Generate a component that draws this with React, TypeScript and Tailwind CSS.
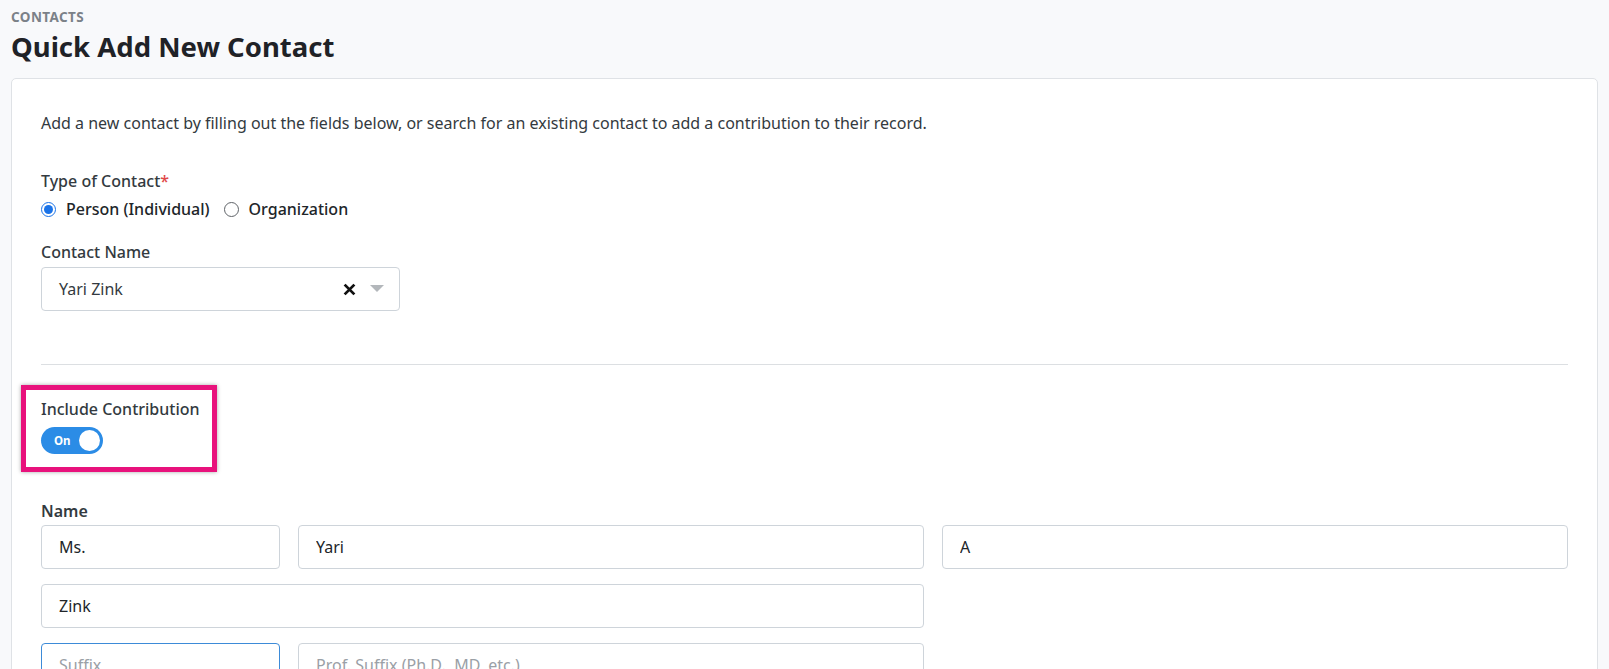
import React, { useState } from "react";

const baseInput =
  "h-[44px] w-full rounded-[4px] border bg-white px-[17px] text-[16px] text-[#212529] placeholder:text-[#9aa0a6] focus:outline-none";
const inputCls = baseInput + " border-[#ced4da]";
const focusCls = baseInput + " border-[#3d8bd8]";

function Radio({ checked, label, onClick }: { checked: boolean; label: string; onClick: () => void }) {
  return (
    <label className="flex cursor-pointer items-center gap-[10px]" onClick={onClick}>
      <span
        className={
          "flex h-[15px] w-[15px] items-center justify-center rounded-full border " +
          (checked ? "border-[#1a73e8]" : "border-[#5f6368]")
        }
      >
        {checked && <span className="h-[9px] w-[9px] rounded-full bg-[#1a73e8]" />}
      </span>
      {label}
    </label>
  );
}

export default function App() {
  const [type, setType] = useState("person");
  const [on, setOn] = useState(true);

  return (
    <div
      className="min-h-screen bg-[#f8f9fb] px-[11px] pt-[8px]"
      style={{ fontFamily: '"Noto Sans", "Open Sans", sans-serif' }}
    >
      <div className="text-[13.5px] font-bold leading-[18px] tracking-[0.4px] text-[#7b8188]">CONTACTS</div>
      <h1 className="mt-[3px] text-[27.5px] font-bold leading-[36px] text-[#1f2227]">Quick Add New Contact</h1>

      <div className="mt-[13px] rounded-[5px] border border-[#dfe2e6] bg-white px-[29px] pt-[32px] pb-[40px]">
        <p className="text-[16px] leading-[24px] text-[#333a40]">
          Add a new contact by filling out the fields below, or search for an existing contact to add a contribution to their record.
        </p>

        <div className="mt-[34px] text-[16px] font-medium leading-[24px] text-[#333a40]">
          Type of Contact<span className="text-[#e04848]">*</span>
        </div>
        <div className="mt-[4px] flex items-center gap-[14px] text-[16px] font-medium leading-[24px] text-[#212529]">
          <Radio checked={type === "person"} label="Person (Individual)" onClick={() => setType("person")} />
          <Radio checked={type === "org"} label="Organization" onClick={() => setType("org")} />
        </div>

        <div className="mt-[19px] text-[16px] font-medium leading-[24px] text-[#333a40]">Contact Name</div>
        <div className="mt-[3px] flex h-[44px] w-[359px] items-center rounded-[4px] border border-[#ced4da] bg-white pl-[17px] pr-[15px]">
          <span className="flex-1 text-[16px] text-[#333a40]">Yari Zink</span>
          <svg width="13" height="13" viewBox="0 0 12 12" className="mr-[14px]">
            <path d="M1.5 1.5 L10.5 10.5 M10.5 1.5 L1.5 10.5" stroke="#111" strokeWidth="2.6" />
          </svg>
          <svg width="14" height="8" viewBox="0 0 14 8">
            <path d="M0 0 H14 L7 7 Z" fill="#b3b7bb" />
          </svg>
        </div>

        <hr className="mt-[53px] border-0 border-t border-[#dcdfe2]" />

        <div className="relative mt-[32px] w-fit">
          <div className="text-[16px] font-medium leading-[24px] text-[#333a40]">Include Contribution</div>
          <button
            onClick={() => setOn(!on)}
            className={
              "mt-[6px] flex h-[27px] w-[62px] items-center rounded-full px-[3px] " +
              (on ? "bg-[#2b8ce6] justify-between" : "bg-[#c8ccd0] justify-between flex-row-reverse")
            }
          >
            <span className={"text-[11.5px] font-bold text-white " + (on ? "pl-[10px]" : "pr-[8px]")}>{on ? "On" : "Off"}</span>
            <span className="h-[21px] w-[21px] rounded-full bg-white" />
          </button>
          <div className="pointer-events-none absolute left-[-20px] top-[-12px] h-[87px] w-[196px] border-[5px] border-[#e8127c] shadow-[0_0_4px_rgba(0,0,0,0.35)]" />
        </div>

        <div className="mt-[45px] text-[16px] font-semibold leading-[24px] text-[#333a40]">Name</div>
        <div className="mt-[2px] grid grid-cols-[239px_1fr_1fr] gap-x-[18px] gap-y-[15px]">
          <input className={inputCls} defaultValue="Ms." />
          <input className={inputCls} defaultValue="Yari" />
          <input className={inputCls} defaultValue="A" />
          <input className={inputCls + " col-span-2"} defaultValue="Zink" />
          <div />
          <input className={focusCls} placeholder="Suffix" />
          <input className={inputCls} placeholder="Prof. Suffix (Ph.D., MD, etc.)" />
        </div>
      </div>
    </div>
  );
}
